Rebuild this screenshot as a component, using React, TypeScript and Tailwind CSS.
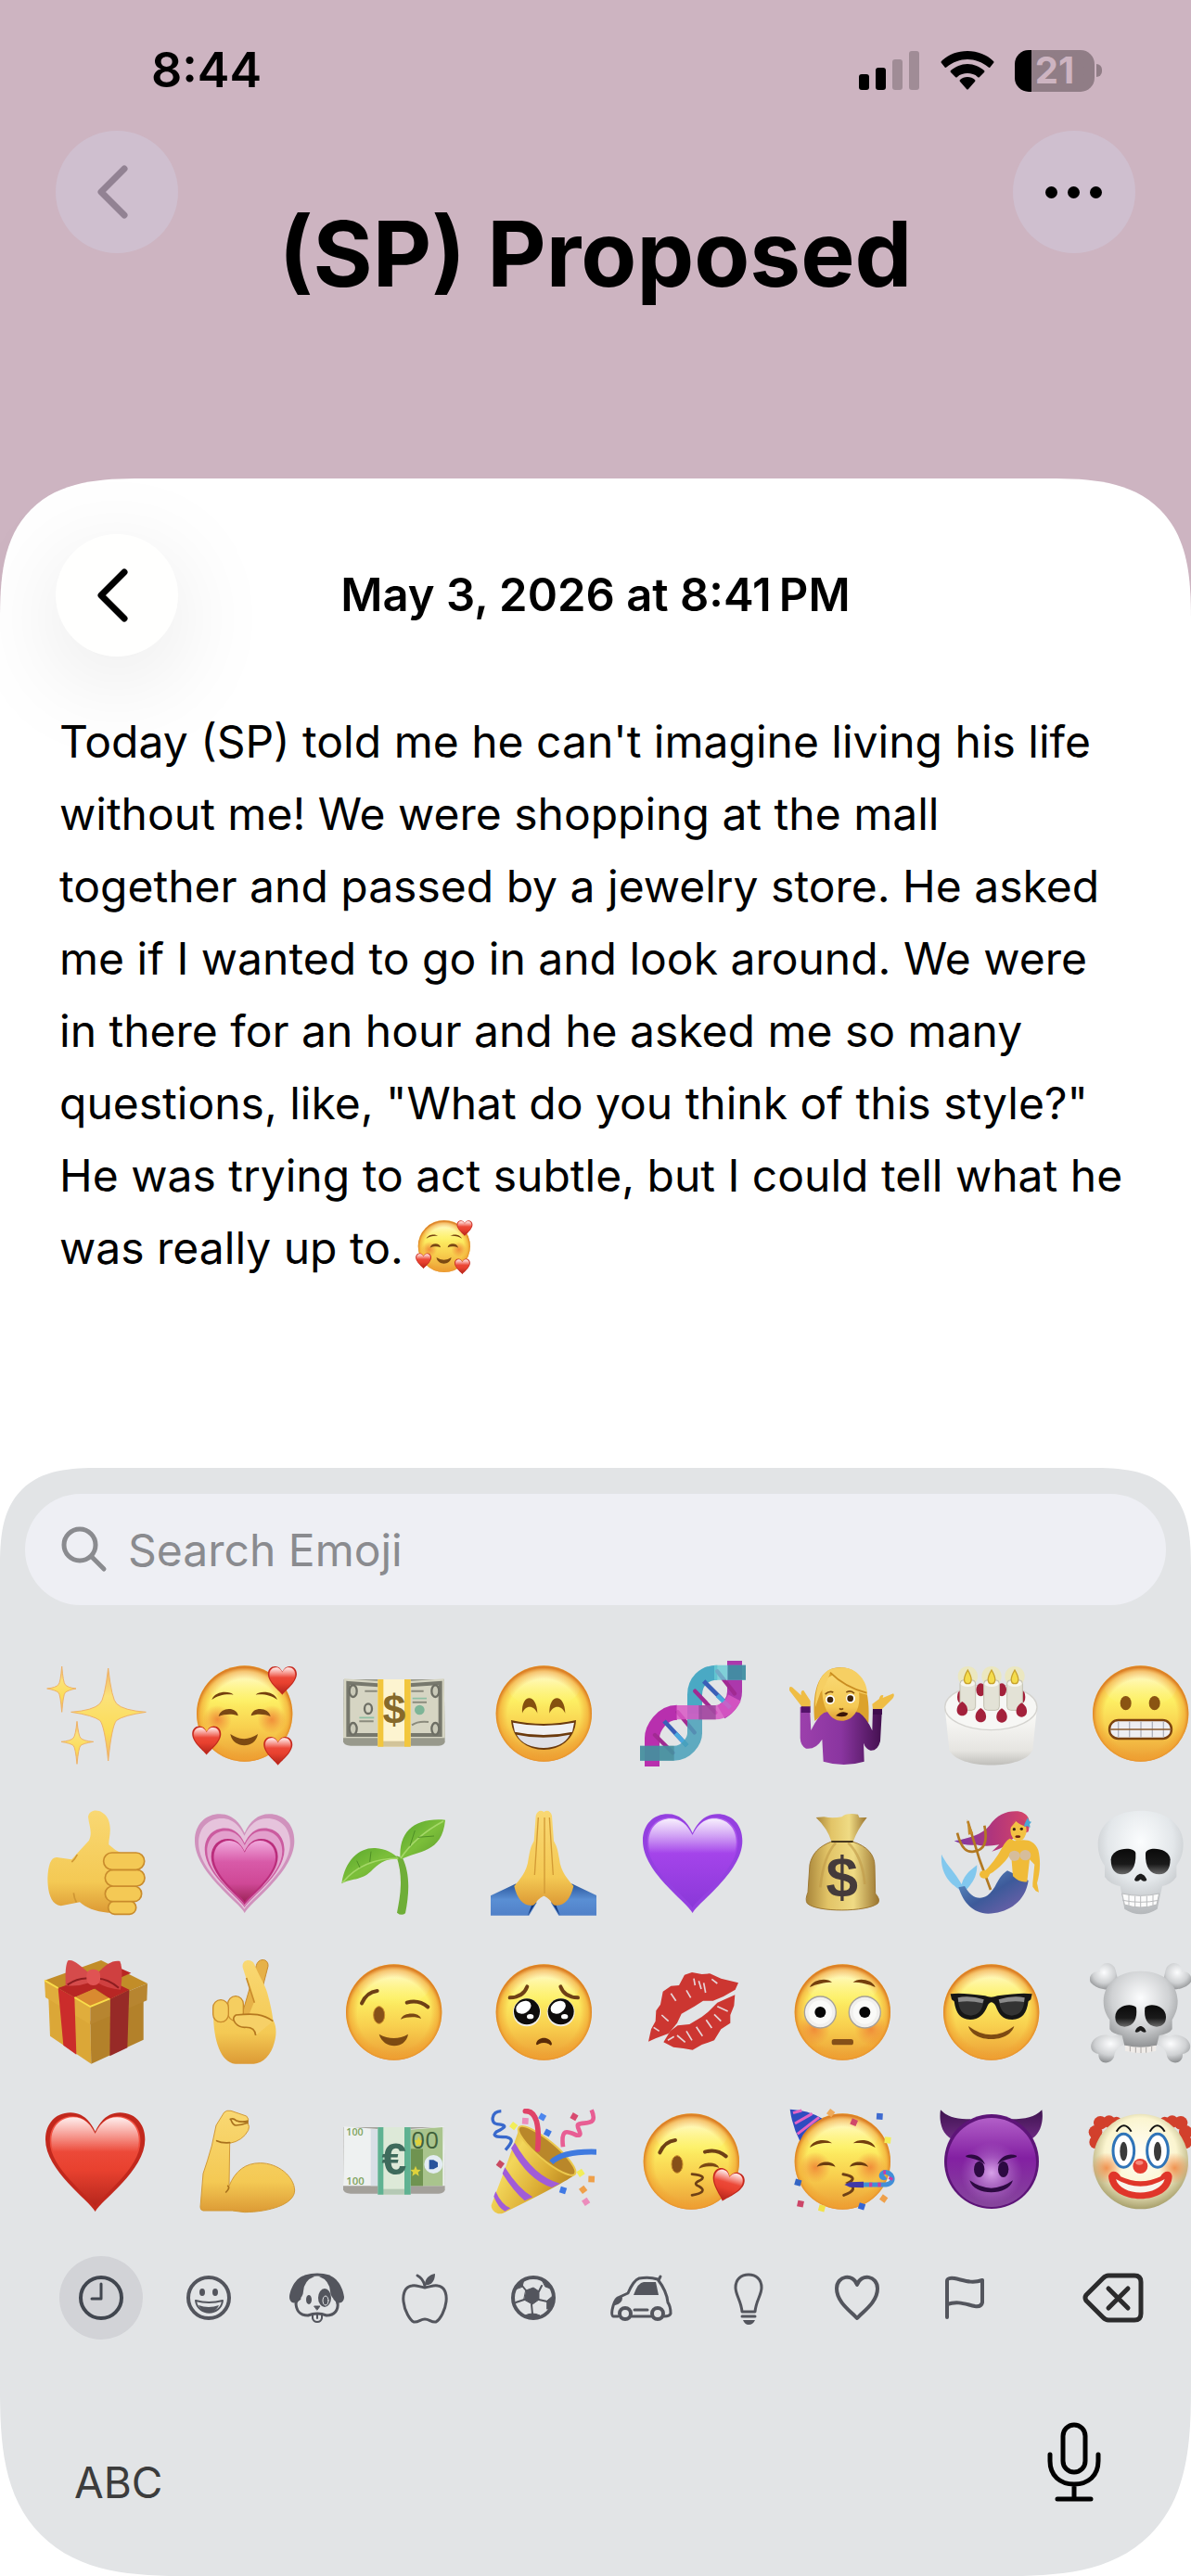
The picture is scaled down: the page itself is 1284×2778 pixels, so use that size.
import { useState } from 'react';
import type { ReactNode } from 'react';

interface Glyph {
  label: string;
  art: ReactNode;
}

const HEART =
  'M170 333 C150 296 9 200 9 100 C9 45 45 13 90 13 C127 13 152 36 170 74 C188 36 213 13 250 13 C295 13 331 45 331 100 C331 200 190 296 170 333Z';

const entryLines = [
  "Today (SP) told me he can't imagine living his life",
  'without me! We were shopping at the mall',
  'together and passed by a jewelry store. He asked',
  'me if I wanted to go in and look around. We were',
  'in there for an hour and he asked me so many',
  'questions, like, "What do you think of this style?"',
  'He was trying to act subtle, but I could tell what he',
];

// Gradients are shared by every emoji on the page, so they are defined once.
function Gradients() {
  return (
    <svg width="0" height="0" className="absolute" aria-hidden="true">
      <defs>
        <linearGradient id="face" x1="0" y1="0" x2="0" y2="1">
          <stop offset="0" stopColor="#fff08a" />
          <stop offset="0.35" stopColor="#fdf064" />
          <stop offset="0.65" stopColor="#f8cf4e" />
          <stop offset="1" stopColor="#eb9c34" />
        </linearGradient>
        <radialGradient id="rim" cx="0.5" cy="0.52" r="0.5">
          <stop offset="0.76" stopColor="#f0a030" stopOpacity="0" />
          <stop offset="0.92" stopColor="#f0a030" stopOpacity="0.6" />
          <stop offset="1" stopColor="#dd8126" />
        </radialGradient>
        <linearGradient id="shine" x1="0" y1="0" x2="0" y2="1">
          <stop offset="0" stopColor="#fffff0" stopOpacity="0.95" />
          <stop offset="1" stopColor="#fff57a" stopOpacity="0" />
        </linearGradient>
        <radialGradient id="blush">
          <stop offset="0" stopColor="#ee7c33" stopOpacity="0.8" />
          <stop offset="1" stopColor="#ee7c33" stopOpacity="0" />
        </radialGradient>
        <linearGradient id="red" x1="0" y1="0" x2="0" y2="1">
          <stop offset="0" stopColor="#f4584a" />
          <stop offset="0.6" stopColor="#e8412f" />
          <stop offset="1" stopColor="#b5261c" />
        </linearGradient>
        <linearGradient id="gloss" x1="0" y1="0" x2="0" y2="1">
          <stop offset="0" stopColor="#fff" stopOpacity="0.9" />
          <stop offset="0.4" stopColor="#fff" stopOpacity="0" />
        </linearGradient>
        <linearGradient id="violet" x1="0" y1="0" x2="0" y2="1">
          <stop offset="0" stopColor="#b164ee" />
          <stop offset="0.4" stopColor="#a444ea" />
          <stop offset="1" stopColor="#8a38d8" />
        </linearGradient>
        <linearGradient id="pink" x1="0" y1="0" x2="0" y2="1">
          <stop offset="0" stopColor="#f0a8dc" />
          <stop offset="0.35" stopColor="#d85aa8" />
          <stop offset="0.7" stopColor="#cf4896" />
          <stop offset="1" stopColor="#9c2458" />
        </linearGradient>
        <linearGradient id="skin" x1="0" y1="0" x2="0" y2="1">
          <stop offset="0" stopColor="#f9d873" />
          <stop offset="0.7" stopColor="#f4c954" />
          <stop offset="1" stopColor="#dc9a35" />
        </linearGradient>
        <linearGradient id="star" x1="0" y1="0" x2="0" y2="1">
          <stop offset="0" stopColor="#f2b368" />
          <stop offset="0.3" stopColor="#fbe27a" />
          <stop offset="0.7" stopColor="#fbdc56" />
          <stop offset="1" stopColor="#f0b070" />
        </linearGradient>
        <linearGradient id="gold" x1="0" y1="0" x2="1" y2="0">
          <stop offset="0" stopColor="#a8853a" />
          <stop offset="0.3" stopColor="#e2c467" />
          <stop offset="0.65" stopColor="#efdb84" />
          <stop offset="1" stopColor="#9a7430" />
        </linearGradient>
        <linearGradient id="foil" x1="0" y1="0" x2="1" y2="0.6">
          <stop offset="0" stopColor="#c28f24" />
          <stop offset="0.35" stopColor="#f3d75a" />
          <stop offset="0.7" stopColor="#dcae35" />
          <stop offset="1" stopColor="#b8841f" />
        </linearGradient>
        <linearGradient id="leaf" x1="0" y1="0" x2="1" y2="1">
          <stop offset="0" stopColor="#57a52c" />
          <stop offset="0.5" stopColor="#7cbf3a" />
          <stop offset="1" stopColor="#5a9a2a" />
        </linearGradient>
        <linearGradient id="sleeve" x1="0" y1="0" x2="0" y2="1">
          <stop offset="0" stopColor="#2a569c" />
          <stop offset="0.5" stopColor="#5a8fd4" />
          <stop offset="1" stopColor="#5080c8" />
        </linearGradient>
        <linearGradient id="sweater" x1="0" y1="0" x2="1" y2="0">
          <stop offset="0" stopColor="#9c40ac" />
          <stop offset="0.5" stopColor="#8a35a0" />
          <stop offset="1" stopColor="#43104f" />
        </linearGradient>
        <linearGradient id="cake" x1="0" y1="0" x2="0" y2="1">
          <stop offset="0" stopColor="#fdfdfb" />
          <stop offset="0.75" stopColor="#e6e5e1" />
          <stop offset="1" stopColor="#bfbeba" />
        </linearGradient>
        <radialGradient id="bone" cx="0.5" cy="0.3" r="0.7">
          <stop offset="0" stopColor="#fbfdfe" />
          <stop offset="0.55" stopColor="#e3e7ea" />
          <stop offset="1" stopColor="#b4b7ba" />
        </radialGradient>
        <radialGradient id="steel" cx="0.5" cy="0.35" r="0.65">
          <stop offset="0" stopColor="#fcfdfe" />
          <stop offset="0.6" stopColor="#cfd1d3" />
          <stop offset="1" stopColor="#8e9092" />
        </radialGradient>
        <linearGradient id="socket" x1="0" y1="0" x2="0" y2="1">
          <stop offset="0" stopColor="#0a0a0a" />
          <stop offset="0.6" stopColor="#1a1a1a" />
          <stop offset="1" stopColor="#6a6a6a" />
        </linearGradient>
        <linearGradient id="tail" x1="0" y1="0" x2="1" y2="1">
          <stop offset="0" stopColor="#5f96c8" />
          <stop offset="0.5" stopColor="#3d5a9a" />
          <stop offset="1" stopColor="#7b62ad" />
        </linearGradient>
        <linearGradient id="mane" x1="0" y1="0" x2="1" y2="0">
          <stop offset="0" stopColor="#7d3aa8" />
          <stop offset="0.5" stopColor="#b0357c" />
          <stop offset="1" stopColor="#d64568" />
        </linearGradient>
        <linearGradient id="imp" x1="0" y1="0" x2="0" y2="1">
          <stop offset="0" stopColor="#b25fc8" />
          <stop offset="0.45" stopColor="#8320a2" />
          <stop offset="1" stopColor="#86479c" />
        </linearGradient>
        <radialGradient id="impGlow">
          <stop offset="0" stopColor="#d8a2ea" />
          <stop offset="1" stopColor="#b070c8" stopOpacity="0" />
        </radialGradient>
        <linearGradient id="horn" x1="0" y1="0" x2="0" y2="1">
          <stop offset="0" stopColor="#3f1450" />
          <stop offset="1" stopColor="#6d2a82" />
        </linearGradient>
        <radialGradient id="clown" cx="0.5" cy="0.42" r="0.58">
          <stop offset="0" stopColor="#fffef8" />
          <stop offset="0.65" stopColor="#fbf5d0" />
          <stop offset="1" stopColor="#a8a06c" />
        </radialGradient>
      </defs>
    </svg>
  );
}

function Emoji({ label, children, className }: { label: string; children: ReactNode; className: string }) {
  return (
    <svg viewBox="0 0 342 342" role="img" aria-label={label} className={className}>
      {children}
    </svg>
  );
}

function Mirror({ children }: { children: ReactNode }) {
  return (
    <>
      {children}
      <g transform="translate(340 0) scale(-1 1)">{children}</g>
    </>
  );
}

function Face({ cx = 170 }: { cx?: number }) {
  return (
    <>
      <circle cx={cx} cy="171" r="155" fill="url(#face)" />
      <ellipse cx={cx} cy="86" rx="116" ry="64" fill="url(#shine)" />
      <circle cx={cx} cy="171" r="155" fill="url(#rim)" />
    </>
  );
}

function Heart({ x, y, size, fill = 'url(#red)', edge = '#c2281d' }: { x: number; y: number; size: number; fill?: string; edge?: string }) {
  return (
    <g transform={`translate(${x} ${y}) scale(${size / 342})`}>
      <path d={HEART} fill={edge} />
      <path d={HEART} transform="translate(15 13) scale(0.91)" fill={fill} />
      <path d={HEART} transform="translate(20 16) scale(0.88)" fill="url(#gloss)" />
    </g>
  );
}

const sadLine = { fill: 'none', stroke: '#6e4016', strokeWidth: 12, strokeLinecap: 'round' as const };
const closedEye = 'M92 174 C100 156 138 156 144 174 C130 168 106 168 92 174Z';

function Wink({ dx = 0 }: { dx?: number }) {
  return (
    <g transform={`translate(${dx} 0)`}>
      <path d="M66 142 Q82 106 116 102" {...sadLine} />
      <path d="M212 140 Q248 128 280 154" {...sadLine} />
      <ellipse cx="122" cy="180" rx="18" ry="28" fill="#875018" stroke="#c98b2a" strokeWidth="3" />
      <path d="M192 194 C200 170 252 170 258 192 C240 184 212 186 192 194Z" fill="#7a4714" />
    </g>
  );
}

function Star({ cx, cy, left, right, top, bottom }: { cx: number; cy: number; left: number; right: number; top: number; bottom: number }) {
  const w = (right - left) * 0.08;
  const h = (bottom - top) * 0.09;
  return (
    <path
      d={`M${cx} ${top} Q${cx + w * 0.6} ${cy - h * 1.5} ${cx + w * 1.4} ${cy - h} Q${cx + w * 2.5} ${cy - h * 0.2} ${right} ${cy} Q${cx + w * 2.5} ${cy + h * 0.4} ${cx + w * 1.4} ${cy + h} Q${cx + w * 0.6} ${cy + h * 1.6} ${cx} ${bottom} Q${cx - w * 0.6} ${cy + h * 1.6} ${cx - w * 1.4} ${cy + h} Q${cx - w * 2.5} ${cy + h * 0.4} ${left} ${cy} Q${cx - w * 2.5} ${cy - h * 0.2} ${cx - w * 1.4} ${cy - h} Q${cx - w * 0.6} ${cy - h * 1.5} ${cx} ${top}Z`}
      fill="url(#star)"
      stroke="#efb266"
      strokeWidth="3"
    />
  );
}

function SmilingHearts() {
  return (
    <>
      <Face />
      <circle cx="82" cy="190" r="46" fill="url(#blush)" />
      <circle cx="258" cy="190" r="46" fill="url(#blush)" />
      <Mirror>
        <path d="M64 126 C74 98 120 96 134 110 C112 106 82 112 64 126Z" fill="#743f0e" />
        <path d="M86 180 C92 148 146 148 149 178 C130 170 104 172 86 180Z" fill="#7a4714" />
      </Mirror>
      <path d="M124 237 Q169 268 213 237 C206 286 132 286 124 237Z" fill="#7d4a12" />
      <Heart x={243} y={14} size={99} />
      <Heart x={-2} y={208} size={99} />
      <Heart x={229} y={242} size={99} />
    </>
  );
}

function Banknote({ euro = false }: { euro?: boolean }) {
  const edge = euro ? '#5fb292' : '#f2c63d';
  return (
    <>
      <path d="M8 60 L6 262 Q10 275 30 275 L315 275 Q334 274 335 262 L332 60Z" fill={euro ? '#a3a09a' : '#98998c'} />
      <path d="M9 58 L170 70 L332 58 L335 250 L6 250Z" fill={euro ? '#eef1f1' : '#d6d5c3'} />
      {euro ? (
        <>
          <path d="M95 66 L170 70 V250 H95Z" fill="#d8dfe6" />
          <path d="M220 68 L328 60 V250 H220Z" fill="#a9c48d" />
          <path d="M222 130 L264 130 V250 H222Z" fill="#6f9350" />
          <circle cx="298" cy="180" r="30" fill="#e3ecf2" />
          <path d="M284 166 h14 l14 8 v14 l-14 8 h-14Z" fill="#28549c" />
          <path d="M250 90 l5 12 12 1 -9 8 3 12 -11 -7 -11 7 3 -12 -9 -8 12 -1Z M240 185 l5 12 12 1 -9 8 3 12 -11 -7 -11 7 3 -12 -9 -8 12 -1Z" fill="#dfd23c" />
          <text x="16" y="88" fontSize="32" fontFamily="Open Sans" fontWeight="600" fill="#7fa35e">100</text>
          <text x="16" y="246" fontSize="34" fontFamily="Open Sans" fontWeight="600" fill="#7fa35e">100</text>
          <text x="226" y="129" fontSize="78" fontFamily="Open Sans" fill="#40603a">00</text>
        </>
      ) : (
        <>
          <path d="M22 72 L165 82 V240 H22Z M176 82 L320 72 V240 H176Z" fill="none" stroke="#77786d" strokeWidth="12" />
          <g fill="#c9c9b8" stroke="#6d6e64" strokeWidth="7">
            <ellipse cx="38" cy="98" rx="12" ry="19" />
            <ellipse cx="38" cy="220" rx="12" ry="19" />
            <ellipse cx="304" cy="98" rx="12" ry="19" />
            <ellipse cx="304" cy="220" rx="12" ry="19" />
            <ellipse cx="87" cy="155" rx="12" ry="16" fill="none" />
          </g>
          <circle cx="253" cy="159" r="16" fill="#7db597" />
          <path d="M58 184 h48 M230 122 h46" stroke="#8fc0a4" strokeWidth="5" />
          <path d="M76 98 h40 M226 98 h40 M58 196 h46 M230 134 h46 M228 208 q20 -14 54 -10" stroke="#8b8b7d" strokeWidth="6" fill="none" />
        </>
      )}
      <rect x="118" y="60" width="106" height="218" rx="3" fill={euro ? '#dde9d8' : '#fdf4d0'} />
      <rect x="118" y="260" width="106" height="18" fill={euro ? '#b5c9b5' : '#d2c49a'} />
      <rect x="118" y="60" width="18" height="218" fill={edge} />
      <rect x="204" y="60" width="20" height="218" fill={edge} />
      <text x="171" y={euro ? 213 : 205} textAnchor="middle" fontSize={euro ? 145 : 134} fontWeight="700" fontFamily="Liberation Sans" fill={euro ? '#3e6a5c' : '#86692a'}>
        {euro ? '€' : '$'}
      </text>
    </>
  );
}

function Confetti({ items }: { items: [number, number, string][] }) {
  return (
    <>
      {items.map(([x, y, fill]) => (
        <rect key={`${x}-${y}`} x={x - 10} y={y - 10} width="20" height="20" fill={fill} transform={`rotate(${(x * 7) % 60} ${x} ${y})`} />
      ))}
    </>
  );
}

const emojiRows: Glyph[][] = [
  [
    {
      label: 'Sparkles',
      art: (
        <>
          <Star cx={212} cy={166} left={92} right={334} top={24} bottom={324} />
          <Star cx={62} cy={90} left={14} right={108} top={18} bottom={166} />
          <Star cx={111} cy={262} left={60} right={164} top={196} bottom={334} />
        </>
      ),
    },
    { label: 'Smiling face with hearts', art: <SmilingHearts /> },
    { label: 'Dollar banknotes', art: <Banknote /> },
    {
      label: 'Beaming face',
      art: (
        <>
          <Face cx={172} />
          <path d="M102 170 C98 104 150 104 151 170 C140 142 112 142 102 170Z M190 170 C188 104 240 104 241 170 C230 142 202 142 190 170Z" fill="#85500f" />
          <path d="M66 192 Q171 216 276 192 C270 320 74 320 66 192Z" fill="#6b3a0d" />
          <path d="M72 200 Q171 220 270 200 L264 230 Q171 250 78 230Z" fill="#f0f0f2" />
          <path d="M84 239 Q171 258 256 239 C230 296 112 296 84 239Z" fill="#dfe0e6" />
        </>
      ),
    },
    {
      label: 'DNA',
      art: (
        <g fill="none">
          <path d="M39 342 V250 C39 220 70 167 120 167" stroke="#b82fae" strokeWidth="48" />
          <path d="M177 170 V110 C177 70 205 38 250 38" stroke="#4aa9c4" strokeWidth="48" />
          <path d="M306 0 V100 C306 125 290 150 262 166" stroke="#ac38ac" strokeWidth="48" />
          <path d="M78 195 L152 275 M206 66 L292 152" stroke="#3a5fb8" strokeWidth="14" />
          <path d="M115 235 L152 275 M250 112 L292 152" stroke="#4aa8de" strokeWidth="14" />
          <path d="M48 240 L106 298 M122 166 L176 232 M178 98 L244 168 M250 34 L306 106" stroke="#a12a92" strokeWidth="13" strokeLinecap="round" />
          <path d="M0 299 H110 C150 299 177 260 177 235 V160" stroke="#48a0b8" strokeOpacity="0.85" strokeWidth="48" />
          <path d="M0 299 H110" stroke="#45868f" strokeOpacity="0.6" strokeWidth="48" />
          <path d="M118 167 H245 C270 167 290 150 306 120" stroke="#d858c4" strokeOpacity="0.85" strokeWidth="46" />
          <path d="M190 167 H245" stroke="#86408c" strokeOpacity="0.6" strokeWidth="46" />
          <path d="M240 38 H342" stroke="#68cbd4" strokeOpacity="0.8" strokeWidth="48" />
          <path d="M284 38 H342" stroke="#357f96" strokeOpacity="0.75" strokeWidth="48" />
        </g>
      ),
    },
    {
      label: 'Woman shrugging',
      art: (
        <>
          <path d="M82 195 C74 120 84 22 165 21 C244 22 262 110 256 200 L230 196 L100 180Z" fill="#dca22c" />
          <path d="M35 150 L66 150 L70 225 Q92 180 112 168 Q170 150 226 168 Q250 184 268 226 L270 150 L300 152 L294 260 Q286 292 262 290 Q246 284 240 266 L242 326 Q176 346 110 326 L106 254 Q86 288 54 284 Q36 276 35 250Z" fill="url(#sweater)" />
          <rect x="38" y="146" width="30" height="22" fill="#54126a" />
          <rect x="270" y="154" width="30" height="20" fill="#3f0d4e" />
          <path d="M40 148 Q26 130 0 96 Q-2 80 10 86 L38 112 Q36 94 46 96 L68 130 L68 148Z" fill="#efbd45" />
          <path d="M270 156 L268 140 L290 124 Q294 108 304 112 L302 120 L336 106 Q342 112 334 122 L300 156Z" fill="#efbd45" />
          <path d="M106 96 Q112 40 170 44 Q222 50 226 110 C230 170 196 196 168 194 C136 194 108 160 106 96Z" fill="url(#skin)" />
          <path d="M84 150 C84 60 114 26 150 24 C210 10 254 62 252 110 Q180 96 132 40 Q118 80 100 104Z" fill="#f6cf63" />
          <path d="M132 38 Q180 86 250 104" stroke="#c98c20" strokeWidth="5" fill="none" />
          <circle cx="132" cy="126" r="15" fill="#fff" />
          <circle cx="198" cy="122" r="15" fill="#fff" />
          <circle cx="132" cy="126" r="10" fill="#3e240c" />
          <circle cx="197" cy="122" r="10" fill="#3e240c" />
          <path d="M116 108 q14 -12 26 -6 M184 102 q16 -8 26 4 M162 154 q6 6 12 0" stroke="#855210" strokeWidth="5" fill="none" />
          <path d="M150 178 Q170 158 190 170 Q184 186 150 178Z" fill="#3b1508" />
        </>
      ),
    },
    {
      label: 'Birthday cake',
      art: (
        <>
          <path d="M20 150 L34 288 C60 354 280 354 304 288 L318 150Z" fill="url(#cake)" />
          <ellipse cx="169" cy="150" rx="149" ry="74" fill="#f7f7f5" stroke="#d4d3cf" strokeWidth="4" />
          <g fill="#a3213b">
            <ellipse cx="136" cy="94" rx="15" ry="21" />
            <ellipse cx="204" cy="94" rx="15" ry="21" />
            <ellipse cx="70" cy="117" rx="10" ry="20" />
            <ellipse cx="270" cy="117" rx="10" ry="20" />
          </g>
          {[94, 171, 246].map((x) => (
            <g key={x}>
              <circle cx={x} cy="50" r="32" fill="#fff06a" opacity="0.3" />
              <rect x={x - 25} y="62" width="50" height="98" rx="12" fill="#e3e2d6" stroke="#c3c1b0" strokeWidth="3" />
              <ellipse cx={x} cy="74" rx="23" ry="10" fill="#f6f5ee" />
              <path d={`M${x} 30 C${x + 18} 60 ${x + 12} 74 ${x} 74 C${x - 12} 74 ${x - 18} 60 ${x} 30Z`} fill="#f4dc4c" stroke="#c8a22c" strokeWidth="4" />
            </g>
          ))}
          {[[76, 156], [136, 177], [204, 178], [268, 160]].map(([x, y]) => (
            <path key={x} d={`M${x} ${y - 24} C${x + 24} ${y - 10} ${x + 22} ${y + 22} ${x} ${y + 22} C${x - 22} ${y + 22} ${x - 24} ${y - 10} ${x} ${y - 24}Z`} fill="#a3213b" />
          ))}
        </>
      ),
    },
    {
      label: 'Grimacing face',
      art: (
        <>
          <Face />
          <ellipse cx="122" cy="137" rx="18" ry="23" fill="#8a5412" />
          <ellipse cx="215" cy="137" rx="18" ry="23" fill="#8a5412" />
          <rect x="69" y="192" width="201" height="60" rx="29" fill="#eeeef2" stroke="#7c430f" strokeWidth="7" />
          <path d="M98 196 V248 M134 196 V248 M171 196 V248 M208 196 V248 M244 196 V248" stroke="#b0b2bd" strokeWidth="4" />
          <path d="M70 222 H270" stroke="#8a5a2c" strokeWidth="5" />
        </>
      ),
    },
  ],
  [
    {
      label: 'Thumbs up',
      art: (
        <>
          <path d="M147 22 C152 -8 196 -4 212 30 C226 66 212 94 214 112 Q232 130 256 140 L240 330 L212 332 C170 330 138 314 120 298 L59 310 C28 306 16 270 16 220 C18 178 26 152 46 153 L94 160 Q120 130 150 98 C162 70 150 52 147 22Z" fill="url(#skin)" />
          <g fill="#f4c955" stroke="#c98b2c" strokeWidth="5">
            <rect x="212" y="294" width="90" height="43" rx="21" />
            <rect x="202" y="246" width="118" height="50" rx="25" />
            <rect x="202" y="193" width="128" height="53" rx="26" />
            <rect x="197" y="138" width="132" height="55" rx="27" />
          </g>
          <path d="M94 168 Q104 160 112 144 M109 298 Q102 286 100 268" stroke="#cf9634" strokeWidth="5" fill="none" />
        </>
      ),
    },
    {
      label: 'Growing heart',
      art: (
        <>
          <path d={HEART} fill="#d092bd" />
          <path d={HEART} transform="translate(13 15) scale(0.92)" fill="#e6c3dc" />
          <path d={HEART} transform="translate(34 48) scale(0.8)" fill="#cb5b9f" />
          <path d={HEART} transform="translate(42 58) scale(0.755)" fill="#e3a0cd" />
          <path d={HEART} transform="translate(56 84) scale(0.67)" fill="#bb2d7c" />
          <path d={HEART} transform="translate(65 91) scale(0.62)" fill="url(#pink)" />
        </>
      ),
    },
    {
      label: 'Seedling',
      art: (
        <>
          <path d="M178 148 C202 220 190 280 180 332 Q194 344 207 334 C222 260 220 200 198 155Z" fill="#6fae38" />
          <path d="M191 160 C184 66 240 24 336 32 C326 140 250 130 191 160Z" fill="url(#leaf)" />
          <path d="M1 238 C12 160 60 120 110 123 C142 125 170 138 188 160 C150 152 122 170 96 198 C62 230 30 220 1 238Z" fill="url(#leaf)" />
          <path d="M192 156 Q240 84 330 36 M4 234 Q70 156 184 156" stroke="#a5d868" strokeWidth="5" fill="none" />
          <path d="M222 116 L238 66 M248 88 L300 84 M60 186 L50 164 M92 168 L96 134" stroke="#4f8f26" strokeWidth="3" />
        </>
      ),
    },
    {
      label: 'Folded hands',
      art: (
        <g transform="translate(2 0)">
          <Mirror>
            <path d="M-2 277 L80 238 L96 290 L147 300 L122 341 L-2 341Z" fill="url(#sleeve)" />
            <path d="M118 341 L147 296 L132 304Z" fill="#16397c" />
            <path d="M174 12 C166 -4 148 0 144 18 L138 100 C124 126 126 130 120 158 C116 200 90 226 74 246 C84 290 106 312 134 308 C148 304 142 290 174 276Z" fill="url(#skin)" />
            <path d="M152 24 L146 118 L140 210 M168 24 V270" stroke="#d39a35" strokeWidth="4" fill="none" />
          </Mirror>
        </g>
      ),
    },
    {
      label: 'Purple heart',
      art: <Heart x={0} y={0} size={342} fill="url(#violet)" edge="#9440e0" />,
    },
    {
      label: 'Money bag',
      art: (
        <>
          <path d="M86 24 L112 22 Q140 28 170 22 Q184 8 222 14 L226 24 L251 24 Q222 60 206 102 H136 Q124 60 86 24Z" fill="url(#gold)" />
          <path d="M134 103 H206 C250 116 276 144 276 180 L278 270 Q296 290 286 302 C250 330 90 332 58 302 Q50 290 60 266 L66 176 C74 140 96 118 134 103Z" fill="url(#gold)" stroke="#9d7834" strokeWidth="3" />
          <path d="M150 106 Q110 150 100 250 M190 106 Q236 150 244 240" stroke="#c09a48" strokeWidth="8" fill="none" opacity="0.6" />
          <path d="M136 102 H206" stroke="#2e2315" strokeWidth="5" />
          <text x="170" y="280" textAnchor="middle" fontSize="186" fontWeight="700" fontFamily="Liberation Sans" fill="#453b3b">$</text>
        </>
      ),
    },
    {
      label: 'Mermaid',
      art: (
        <>
          <path d="M74 262 C40 240 4 210 9 143 C26 180 50 196 74 240 C84 204 110 190 124 178 C124 220 106 240 82 266Z" fill="#82c8ee" />
          <path d="M222 196 L290 228 C280 300 220 334 160 335 C110 334 80 300 64 250 L84 246 C104 282 130 294 158 276 C188 252 190 216 222 196Z" fill="url(#tail)" />
          <path d="M50 100 C100 90 140 80 164 50 C190 14 220 2 256 4 C296 10 298 40 290 70 L240 92 Q220 120 172 134 L196 112 Q150 120 120 112 Q90 118 50 100Z" fill="url(#mane)" />
          <path d="M230 92 L246 100 C280 92 310 96 322 130 C332 170 326 210 318 236 L324 266 L314 262 L304 248 L304 236 L310 176 L294 160 L286 232 Q262 236 240 214 L234 140 Q200 190 156 212 L140 206 Q180 170 206 120 Q216 100 230 92Z" fill="#f0bb38" />
          <ellipse cx="258" cy="66" rx="26" ry="34" fill="#f3c244" />
          <path d="M230 60 C240 22 280 20 290 56 Q262 48 250 36Z" fill="#c8406a" />
          <path d="M282 36 l6 -12 4 12 8 2 -6 8 2 10 -10 -4 -10 2 2 -10Z" fill="#4ba8d4" />
          <circle cx="244" cy="62" r="5" fill="#3a2211" />
          <circle cx="268" cy="61" r="5" fill="#3a2211" />
          <ellipse cx="256" cy="86" rx="9" ry="4" fill="#6e2410" />
          <ellipse cx="245" cy="148" rx="18" ry="17" fill="#d6bd9c" />
          <ellipse cx="280" cy="146" rx="18" ry="17" fill="#d6bd9c" />
          <path d="M94 36 L132 160 L168 258 M60 74 C74 128 92 138 114 134 C144 130 160 110 148 50" stroke="#b27922" strokeWidth="8" fill="none" />
          <path d="M92 30 L112 76 L96 80Z" fill="#c48a2a" />
          <ellipse cx="148" cy="208" rx="16" ry="13" fill="#f0bb38" />
        </>
      ),
    },
    {
      label: 'Skull',
      art: (
        <>
          <path d="M32 108 C34 44 90 2 170 2 C250 2 306 44 308 108 C308 140 300 160 286 180 L286 216 Q270 240 240 246 L224 320 Q170 354 118 320 L104 246 Q70 240 54 216 L54 180 C40 160 32 140 32 108Z" fill="url(#bone)" />
          <path d="M74 160 C76 120 152 116 154 140 C156 186 138 208 110 208 C86 208 74 190 74 160Z" fill="url(#socket)" />
          <path d="M266 160 C264 120 188 116 186 140 C184 186 202 208 230 208 C254 208 266 190 266 160Z" fill="url(#socket)" />
          <path d="M150 226 C154 212 164 206 170 206 C176 206 186 212 190 226 Q184 236 170 224 Q156 236 150 226Z" fill="#1c1c1c" />
          <path d="M110 270 Q170 284 230 270 L222 306 Q170 324 118 306Z" fill="#fbfbfb" stroke="#b9bbbd" strokeWidth="3" />
          <path d="M132 274 V312 M152 278 V316 M170 278 V318 M190 278 V316 M210 274 V312 M112 292 Q170 304 228 292" stroke="#b9bbbd" strokeWidth="3" fill="none" />
        </>
      ),
    },
  ],
  [
    {
      label: 'Wrapped gift',
      art: (
        <>
          <path d="M19 125 L154 200 L157 338 L24 248Z" fill="#dba737" />
          <path d="M326 130 L154 200 L157 338 L326 260Z" fill="#b3812a" />
          <path d="M6 68 L189 3 L339 78 L154 153Z" fill="#c28d28" />
          <path d="M6 68 L154 153 V211 L9 123Z" fill="#e0ad3c" />
          <path d="M339 78 L154 153 V211 L337 133Z" fill="#b78530" />
          <path d="M50 93 L103 123 L109 308 L67 278Z" fill="#cb2c2b" />
          <path d="M219 128 L280 98 L274 286 L217 313Z" fill="#972a27" />
          <path d="M50 93 L240 24 L286 44 L103 123Z M104 52 L160 40 L280 98 L219 128Z" fill="#b82624" />
          <path d="M103 123 L165 96 L217 127 L154 153Z" fill="#d98a30" />
          <path d="M6 68 L50 93 M103 123 L154 153 L217 127" stroke="#f9dd4a" strokeWidth="6" fill="none" />
          <path d="M150 44 C120 20 100 -2 82 4 C72 20 74 60 74 84 Q110 90 150 76Z" fill="#d54b4b" />
          <path d="M178 44 C204 16 226 2 250 6 C260 30 256 70 252 98 Q210 96 178 76Z" fill="#cf4040" />
          <path d="M80 82 Q116 58 150 62 M246 92 Q210 62 178 62" stroke="#8d1d20" strokeWidth="6" fill="none" />
          <rect x="142" y="32" width="44" height="52" rx="20" fill="#e05353" />
        </>
      ),
    },
    {
      label: 'Crossed fingers',
      art: (
        <>
          <path d="M208 20 C214 -6 248 -4 246 22 L226 100 L196 190 L160 184Z" fill="#e6b148" stroke="#c98b2c" strokeWidth="3" />
          <path d="M69 180 L120 150 L180 190 L200 140 L164 26 C160 0 192 -4 202 16 C214 50 236 80 244 110 Q258 160 262 196 C276 220 272 250 266 270 C256 310 230 336 200 338 H140 C92 334 70 260 69 180Z" fill="url(#skin)" />
          <path d="M202 140 L176 60" stroke="#c98b2c" strokeWidth="5" />
          <g fill="#f5ce60" stroke="#c98b2c" strokeWidth="4">
            <rect x="116" y="119" width="50" height="80" rx="25" />
            <rect x="68" y="131" width="50" height="72" rx="25" />
          </g>
          <path d="M262 200 C230 176 200 174 142 180 C124 190 140 218 170 220 Q204 218 206 246" fill="#f6d067" stroke="#b5781f" strokeWidth="5" />
        </>
      ),
    },
    {
      label: 'Winking face',
      art: (
        <>
          <Face />
          <Wink />
          <path d="M122 242 Q170 268 216 242 C208 292 136 292 122 242Z" fill="#7d4a12" />
        </>
      ),
    },
    {
      label: 'Pleading face',
      art: (
        <>
          <Face cx={172} />
          <g transform="translate(2 0)">
            <Mirror>
              <path d="M60 124 Q104 122 116 88" {...sadLine} />
              <circle cx="115" cy="172" r="45" fill="#f0efe8" />
              <circle cx="115" cy="169" r="42" fill="#0e0c0b" />
            </Mirror>
          </g>
          <ellipse cx="106" cy="155" rx="26" ry="19" transform="rotate(-30 106 155)" fill="#fff" />
          <ellipse cx="218" cy="155" rx="26" ry="19" transform="rotate(-30 218 155)" fill="#fff" />
          <ellipse cx="128" cy="185" rx="11" ry="8" fill="#fff" />
          <ellipse cx="239" cy="185" rx="11" ry="8" fill="#fff" />
          <path d="M147 274 C150 248 194 248 198 274 Q196 282 188 274 Q172 266 156 274 Q148 280 147 274Z" fill="#5a2b08" />
        </>
      ),
    },
    {
      label: 'Kiss mark',
      art: (
        <>
          <path d="M27 266 L36 226 L50 200 L52 166 L66 146 L74 104 L100 86 L126 84 L144 50 L168 42 L200 48 L226 46 L262 62 L318 76 L308 98 L270 120 L236 134 L204 134 L176 152 L134 176 L120 206 L92 240 L50 256Z" fill="#cc3631" />
          <path d="M76 268 L98 232 L122 214 L160 210 L200 186 L220 170 L250 140 L307 115 L304 150 L292 180 L292 206 L262 226 L240 262 L200 276 L170 293 L140 288 L108 284Z" fill="#cc3631" />
          <path d="M190 70 L198 96 M206 76 L212 108 M174 62 L178 84 M150 100 L164 124 M232 64 L250 78 M100 110 L116 134 M70 180 L92 200 M44 220 L62 232 M120 246 L146 268 M150 232 L168 262 M182 218 L202 248 M214 196 L232 222 M240 178 L262 200 M90 262 L110 250 M250 152 L284 168" stroke="#e6d5d8" strokeWidth="5" />
        </>
      ),
    },
    {
      label: 'Flushed face',
      art: (
        <>
          <Face cx={172} />
          <g transform="translate(2 0)">
            <Mirror>
              <circle cx="78" cy="226" r="52" fill="url(#blush)" />
              <path d="M64 90 C74 64 120 58 136 74 C112 74 84 80 64 90Z" fill="#743f0e" />
              <circle cx="98" cy="171" r="51" fill="#f1f0ee" stroke="#a5a09a" strokeWidth="4" />
              <circle cx="98" cy="171" r="38" fill="#fafaf8" />
              <circle cx="98" cy="171" r="18" fill="#060606" />
            </Mirror>
          </g>
          <rect x="137" y="258" width="70" height="19" rx="8" fill="#855018" />
        </>
      ),
    },
    {
      label: 'Sunglasses face',
      art: (
        <>
          <Face />
          <path d="M96 216 Q170 272 244 216 C240 232 220 258 170 258 C120 258 100 232 96 216Z" fill="#7d4a12" />
          <path d="M38 112 Q70 106 150 118 Q170 126 190 118 Q270 106 302 112 L298 130 L290 136 C284 176 270 194 238 195 C206 194 196 180 184 150 Q170 128 158 150 C146 180 130 194 102 195 C70 194 56 176 50 136 L42 130Z" fill="#161616" />
          <Mirror>
            <path d="M62 124 Q100 116 146 130 C142 164 130 180 104 182 C76 180 64 164 62 124Z" fill="#343434" />
            <path d="M62 124 Q100 116 146 130 L142 142 Q100 132 64 138Z" fill="#8b8b8b" />
          </Mirror>
        </>
      ),
    },
    {
      label: 'Skull and crossbones',
      art: (
        <>
          <Mirror>
            <path d="M86 100 C60 96 30 100 8 74 C-2 50 24 34 38 42 C32 12 70 0 86 26 C92 40 92 54 98 66Z" fill="url(#steel)" />
            <path d="M110 240 L76 250 C50 236 16 252 10 276 C6 300 26 304 34 306 C32 340 72 344 84 316 C88 290 100 280 136 268Z" fill="url(#steel)" />
          </Mirror>
          <path d="M50 134 C52 76 100 38 170 38 C240 38 288 76 290 134 C290 166 280 180 272 196 L272 226 Q262 242 230 246 L222 278 Q170 296 118 278 L110 246 Q78 242 70 226 L70 196 C60 180 50 166 50 134Z" fill="url(#steel)" />
          <path d="M88 186 C88 150 140 138 156 156 C160 190 150 216 118 218 C98 216 88 206 88 186Z" fill="url(#socket)" />
          <path d="M252 186 C252 150 200 138 184 156 C180 190 190 216 222 218 C242 216 252 206 252 186Z" fill="url(#socket)" />
          <path d="M152 234 C156 220 166 216 170 216 C174 216 184 220 188 234 Q182 240 170 230 Q158 240 152 234Z" fill="#1c1c1c" />
          <path d="M120 278 Q170 290 220 278 V296 Q170 310 120 296Z" fill="#f0ece9" />
          <path d="M136 282 V298 M154 284 V302 M171 284 V303 M188 284 V302 M206 282 V298" stroke="#a9a6a4" strokeWidth="3" />
        </>
      ),
    },
  ],
  [
    { label: 'Red heart', art: <Heart x={0} y={0} size={342} /> },
    {
      label: 'Flexed biceps',
      art: (
        <>
          <path d="M78 54 L104 12 Q112 4 126 7 L176 24 Q186 32 180 46 Q188 58 182 70 Q164 104 122 112 L120 250 Q150 176 220 176 C280 176 330 220 332 264 C332 310 250 334 170 335 L130 330 L36 330 Q26 328 27 318 L36 210 Q50 170 64 120Z" fill="url(#skin)" stroke="#d19a38" strokeWidth="3" />
          <path d="M116 250 Q124 256 110 270 M80 104 Q96 112 122 110 M124 34 Q134 30 142 38 Q160 46 180 40 M126 36 Q132 54 142 54 Q158 54 180 46" stroke="#a8701c" strokeWidth="5" fill="none" strokeLinecap="round" />
        </>
      ),
    },
    { label: 'Euro banknotes', art: <Banknote euro /> },
    {
      label: 'Party popper',
      art: (
        <>
          <path d="M92 66 C100 40 290 180 274 212 Q240 240 40 338 C20 346 0 328 2 312 Q50 190 92 66Z" fill="url(#foil)" />
          <ellipse cx="182" cy="136" rx="118" ry="30" transform="rotate(40 182 136)" fill="#b9872a" stroke="#ecc94d" strokeWidth="6" />
          <path d="M66 128 Q120 230 198 255 L224 242 Q140 220 78 110Z M38 210 Q76 270 110 298 L136 286 Q90 260 46 190Z M10 284 Q24 320 46 332 L64 322 Q36 312 16 268Z" fill="#a15cd8" />
          <path d="M112 8 C150 6 158 60 152 132" stroke="#e04268" strokeWidth="17" fill="none" strokeLinecap="round" />
          <path d="M196 174 C220 150 270 138 342 140" stroke="#3f7ae0" strokeWidth="18" fill="none" />
          <path d="M34 8 C0 10 0 48 20 50 C60 54 44 62 20 74 C0 90 22 92 50 92 C78 98 66 112 48 134" stroke="#3969cc" strokeWidth="10" fill="none" />
          <path d="M234 124 C226 60 250 74 278 86 C304 90 276 60 282 52 C300 40 350 60 326 4" stroke="#e85e94" strokeWidth="14" fill="none" />
          <Confetti items={[[112, 40, '#ec8cbc'], [167, 27, '#4d87ee'], [74, 56, '#f2ee5a'], [184, 78, '#3f78e4'], [270, 26, '#d84a70'], [31, 180, '#c94a62'], [291, 208, '#f2ee5a'], [326, 228, '#efa04a'], [299, 262, '#efa04a'], [234, 264, '#3f78e4'], [308, 301, '#ec8cbc']]} />
        </>
      ),
    },
    {
      label: 'Kissing face',
      art: (
        <>
          <Face cx={166} />
          <Wink dx={-2} />
          <path d="M168 212 Q224 218 190 234 Q170 244 192 252 Q222 270 168 280" stroke="#6e4016" strokeWidth="8" fill="none" strokeLinecap="round" />
          <g transform="rotate(16 280 250)">
            <Heart x={226} y={194} size={110} />
          </g>
        </>
      ),
    },
    {
      label: 'Partying face',
      art: (
        <>
          <Face cx={172} />
          <path d="M2 2 Q60 4 106 32 Q54 58 34 104 Q10 60 2 2Z" fill="#2f4cc0" />
          <path d="M12 14 L40 6 M18 48 L74 16 M26 82 L96 28" stroke="#e463c4" strokeWidth="9" />
          <circle cx="84" cy="190" r="50" fill="url(#blush)" />
          <circle cx="262" cy="190" r="50" fill="url(#blush)" />
          <g transform="translate(2 0)">
            <Mirror>
              <path d="M64 126 C74 98 120 96 136 112 C112 108 82 114 64 126Z" fill="#743f0e" />
              <path d={closedEye} transform="translate(-19 -12) scale(1.15)" fill="#6b3c10" />
            </Mirror>
          </g>
          <path d="M174 212 Q226 222 190 240 Q228 262 176 280" stroke="#6e4016" strokeWidth="9" fill="none" strokeLinecap="round" />
          <path d="M178 246 L196 238 L240 236 V256 L196 254Z" fill="#4038a8" />
          <path d="M240 246 H312 C350 240 330 200 306 206 C290 214 300 230 312 222" stroke="#418fd8" strokeWidth="15" fill="none" />
          <path d="M258 246 h10 M286 246 h10 M326 230 l4 -8 M312 206 l-8 0" stroke="#c93ca4" strokeWidth="13" />
          <Confetti items={[[134, 14, '#efaa5a'], [209, 44, '#d0486a'], [292, 25, '#3f6bd0'], [318, 102, '#f2ee5a'], [28, 239, '#3465c4'], [36, 308, '#cc4668'], [105, 322, '#f2e24a'], [234, 316, '#3465d4'], [305, 291, '#efa04a']]} />
        </>
      ),
    },
    {
      label: 'Smiling devil',
      art: (
        <>
          <Mirror>
            <path d="M6 4 C30 28 60 34 104 34 L44 100 C10 84 0 40 6 4Z" fill="url(#horn)" />
          </Mirror>
          <circle cx="171" cy="171" r="153" fill="#5d1478" />
          <circle cx="171" cy="174" r="144" fill="url(#imp)" />
          <circle cx="171" cy="208" r="100" fill="url(#impGlow)" />
          <Mirror>
            <path d="M88 152 C110 142 140 152 150 180 C130 164 108 162 88 156Z" fill="#2d0a42" />
            <ellipse cx="131" cy="196" rx="17" ry="26" fill="#2d0a42" />
          </Mirror>
          <path d="M100 232 Q170 282 240 232 C226 284 114 284 100 232Z" fill="#2d0a42" />
        </>
      ),
    },
    {
      label: 'Clown face',
      art: (
        <>
          <Mirror>
            <g fill="#d2402c">
              <circle cx="40" cy="46" r="22" />
              <circle cx="68" cy="42" r="20" />
              <circle cx="24" cy="76" r="22" />
              <circle cx="26" cy="108" r="22" />
              <circle cx="92" cy="42" r="16" />
            </g>
          </Mirror>
          <circle cx="170" cy="171" r="154" fill="url(#clown)" />
          <circle cx="60" cy="192" r="50" fill="url(#blush)" />
          <circle cx="280" cy="192" r="50" fill="url(#blush)" />
          <Mirror>
            <path d="M92 74 Q116 36 140 74" stroke="#111" strokeWidth="6" fill="none" />
            <ellipse cx="115" cy="136" rx="34" ry="54" fill="#fff" stroke="#2f74b8" strokeWidth="9" />
            <ellipse cx="115" cy="138" rx="12" ry="31" fill="#3a3a3a" />
          </Mirror>
          <path d="M66 218 C72 196 96 200 106 220 Q170 250 234 220 C244 200 268 196 272 218 C270 316 70 316 66 218Z" fill="#e0352a" />
          <path d="M90 228 Q170 274 248 228 C232 286 106 286 90 228Z" fill="#f8f4ec" />
          <circle cx="169" cy="186" r="24" fill="#e33d31" />
          <ellipse cx="166" cy="175" rx="12" ry="7" fill="#f58a7c" />
        </>
      ),
    },
  ],
];

const categories: Glyph[] = [
  {
    label: 'Frequently used',
    art: (
      <>
        <circle cx="45" cy="45" r="22" />
        <path d="M45 30 V46 H35" strokeWidth="3" />
      </>
    ),
  },
  {
    label: 'Smileys',
    art: (
      <>
        <circle cx="45" cy="45" r="22" />
        <ellipse cx="38" cy="39" rx="3" ry="4" fill="currentColor" stroke="none" />
        <ellipse cx="52" cy="39" rx="3" ry="4" fill="currentColor" stroke="none" />
        <path d="M31 48 Q45 52 60 48 C58 65 33 65 31 48Z" strokeWidth="2" />
        <path d="M34 53 Q45 57 56 53 C52 63 38 63 34 53Z" fill="currentColor" stroke="none" />
      </>
    ),
  },
  {
    label: 'Animals',
    art: (
      <>
        <path d="M32 22 Q45 18 58 22 M22 50 C22 58 26 64 35 64 Q45 60 55 64 C64 64 68 58 67 50 M26 46 Q22 48 22 52 M64 46 Q67 48 67 52" strokeWidth="3" />
        <path d="M36 21 C24 19 16 34 15 44 C15 50 20 52 23 49 Q30 44 30 38 Q31 26 42 22Z M53 21 C65 19 73 34 74 44 C74 50 69 52 66 49 Q59 44 59 38 Q58 26 47 22Z" fill="currentColor" stroke="none" />
        <ellipse cx="53" cy="45" rx="7" ry="10" fill="currentColor" stroke="none" />
        <ellipse cx="54" cy="48" rx="3" ry="5" stroke="#e2e4e6" strokeWidth="1" />
        <ellipse cx="36" cy="47" rx="3" ry="5" fill="currentColor" stroke="none" />
        <path d="M42 54 h6 l-3 4Z" fill="currentColor" strokeWidth="1" />
        <path d="M40 64 V67 Q41 71 45 71 Q49 71 50 67 V64 M45 63 V67" strokeWidth="2" />
      </>
    ),
  },
  {
    label: 'Food',
    art: (
      <>
        <path d="M45 34 C38 33 36 31 31 32 C24 33 21 40 22 49 C23 59 29 69 33 71 C38 72 40 68 45 68 C50 68 52 72 57 71 C62 68 67 58 68 49 C69 40 66 33 59 32 C54 31 52 33 45 34Z" strokeWidth="3" />
        <path d="M37 21 Q43 24 45 32" strokeWidth="3" />
        <path d="M45 31 C45 24 50 20 56 19 C56 27 52 32 45 31Z" fill="currentColor" stroke="none" />
      </>
    ),
  },
  {
    label: 'Activities',
    art: (
      <>
        <circle cx="45" cy="45" r="22" />
        <path d="M37 37 L45 34 L51 38 L51 47 L44 52 L35 47Z M54 25 Q62 28 66 36 L58 33Z M25 36 L35 25 L33 33Z M60 48 L67 42 L66 55 L60 57Z M36 64 Q44 60 52 64 L46 67Z" fill="currentColor" strokeWidth="1" />
        <path d="M37 37 L33 32 M51 38 L54 32 M51 47 L60 49 M43 52 L44 62 M35 47 L26 50" strokeWidth="2" />
      </>
    ),
  },
  {
    label: 'Travel',
    art: (
      <>
        <path d="M20 65 H15 Q13 64 14 58 Q16 48 20 45 L31 40 Q37 26 43 24 Q54 22 63 25 Q73 38 74 50 Q77 54 77 62 Q76 65 70 65 M35 65 H56 M38 58 H52 M64 26 L66 22" strokeWidth="3" />
        <path d="M37 42 Q42 28 48 28 H61 L64 42Z" fill="currentColor" stroke="none" />
        <path d="M17 52 Q18 46 24 45 Q24 50 17 52Z" fill="currentColor" strokeWidth="2" />
        <circle cx="28" cy="62" r="6" />
        <circle cx="63" cy="62" r="6" />
      </>
    ),
  },
  {
    label: 'Objects',
    art: (
      <>
        <path d="M38 60 C37 48 31 42 31 34 C31 25 37 20 45 20 C53 20 59 25 59 34 C59 42 53 48 52 60Z" strokeWidth="3" />
        <path d="M38 65 H52" strokeWidth="3" />
        <path d="M39 69 H52 Q50 74 45 74 Q41 74 39 69Z" fill="currentColor" stroke="none" />
      </>
    ),
  },
  {
    label: 'Symbols',
    art: <path d="M45 67 C39 60 23 50 23 35 C23 21 41 18 45 31 C49 18 67 21 67 35 C67 50 51 60 45 67Z" />,
  },
  {
    label: 'Flags',
    art: <path d="M26 66 V27 Q26 23 34 24 C44 26 52 30 64 26 V50 Q63 55 56 54 C46 52 38 48 26 52" />,
  },
];

function BackChevron() {
  return (
    <svg viewBox="0 0 36 60" className="-ml-2 w-9" fill="none" stroke="currentColor" strokeWidth="7" strokeLinecap="round" strokeLinejoin="round" aria-hidden="true">
      <path d="M30 5 L5 30 L30 55" />
    </svg>
  );
}

function StatusBar() {
  return (
    <div className="flex h-12 items-center justify-between pr-24 pl-[163px]">
      <span className="text-[52px] leading-[48px] font-semibold">8:44</span>
      <div className="flex items-center gap-[22px]">
        <svg viewBox="0 0 66 42" className="h-[42px] w-[66px]" aria-label="Signal" role="img">
          <rect x="0" y="25" width="11" height="17" rx="3" />
          <rect x="18" y="18" width="11" height="24" rx="3" />
          <rect x="36" y="9" width="11" height="33" rx="3" fillOpacity="0.22" />
          <rect x="54" y="0" width="11" height="42" rx="3" fillOpacity="0.22" />
        </svg>
        <svg viewBox="0 0 58 42" className="h-[42px] w-[58px]" aria-label="Wi-Fi" role="img">
          <path d="M29 0 C40 0 50 4 57 11 Q58 12 57 13 L53 18 Q52 18 51 17 C45 12 37 9 29 9 C21 9 13 12 7 17 Q6 18 5 18 L1 13 Q0 12 1 11 C8 4 18 0 29 0Z" />
          <path d="M29 14 C36 14 42 17 47 21 Q48 22 47 23 L42 28 Q41 29 40 28 C37 25 33 24 29 24 C25 24 21 25 18 28 Q17 29 16 28 L11 23 Q10 22 11 21 C16 17 22 14 29 14Z" />
          <path d="M29 28 C32 28 35 29 37 31 Q38 32 37 33 L30 41 Q29 42 28 41 L21 33 Q20 32 21 31 C23 29 26 28 29 28Z" />
        </svg>
        <div className="flex items-center gap-0.5">
          <div className="flex h-[45px] w-[86px] items-center justify-center rounded-[15px] bg-linear-to-r from-black from-21% to-[#907d86] to-21%">
            <span className="text-[40px] leading-none font-bold text-[#cdb4c1]">21</span>
          </div>
          <div className="h-3.5 w-1.5 rounded-r-full bg-[#907d86]" />
        </div>
      </div>
    </div>
  );
}

function EmojiKeyboard() {
  const [active, setActive] = useState('Frequently used');
  const [query, setQuery] = useState('');

  return (
    <section
      aria-label="Emoji keyboard"
      className="mt-auto overflow-hidden rounded-t-[108px] rounded-b-[204px] bg-[#e2e4e6] pt-7 pb-20 [corner-shape:superellipse(1.5)]"
    >
      <label className="mx-[27px] flex h-[120px] items-center gap-[22px] rounded-full bg-[#eeeff4] px-[39px] text-[#8a8b8f]">
        <svg viewBox="0 0 50 50" className="size-[50px] shrink-0" fill="none" stroke="currentColor" strokeWidth="5" strokeLinecap="round" aria-hidden="true">
          <circle cx="20" cy="20" r="17" />
          <path d="M33 33 L46 46" />
        </svg>
        <input
          type="text"
          aria-label="Search Emoji"
          placeholder="Search Emoji"
          value={query}
          onChange={(e) => setQuery(e.target.value)}
          className="h-full min-w-0 flex-1 bg-transparent text-[48px] text-black outline-none placeholder:text-[#8a8b8f]"
        />
      </label>

      <div className="mt-[60px] flex flex-col gap-[47px] overflow-hidden pl-[46px]">
        {emojiRows.map((row) => (
          <div key={row[0].label} className="flex gap-[47px]">
            {row.map((emoji) => (
              <button key={emoji.label} type="button" className="size-[114px] shrink-0">
                <Emoji label={emoji.label} className="size-full">
                  {emoji.art}
                </Emoji>
              </button>
            ))}
          </div>
        ))}
      </div>

      <div className="mt-[45px] flex items-center gap-[82px] pr-[51px] pl-16">
        <nav className="flex flex-1 justify-between">
          {categories.map((category) => (
            <button
              key={category.label}
              type="button"
              aria-label={category.label}
              onClick={() => setActive(category.label)}
              className={`size-[90px] rounded-full ${active === category.label ? 'bg-[#d2d3d7] text-[#41464f]' : 'text-[#53555d]'}`}
            >
              <svg viewBox="0 0 90 90" className="size-full" fill="none" stroke="currentColor" strokeWidth="4" strokeLinecap="round" strokeLinejoin="round" aria-hidden="true">
                {category.art}
              </svg>
            </button>
          ))}
        </nav>
        <button type="button" aria-label="Delete" className="text-[#2b2b2c]">
          <svg viewBox="0 0 66 54" className="h-[54px] w-[66px]" fill="none" stroke="currentColor" strokeWidth="5" strokeLinecap="round" strokeLinejoin="round" aria-hidden="true">
            <path d="M28 3 H56 Q63 3 63 10 V44 Q63 51 56 51 H28 Q25 51 22 48 L4 30 Q2 27 4 24 L22 6 Q25 3 28 3Z" />
            <path d="M28 17 L49 38 M49 17 L28 38" />
          </svg>
        </button>
      </div>

      <div className="mt-[89px] flex items-end justify-between pr-[97px] pl-20">
        <button type="button" className="text-[46px] leading-[42px] text-[#3c3c3c]">
          ABC
        </button>
        <button type="button" aria-label="Dictate">
          <svg viewBox="0 0 58 86" className="h-[86px] w-[58px]" fill="none" stroke="currentColor" strokeWidth="5" strokeLinecap="round" aria-hidden="true">
            <rect x="17" y="3" width="24" height="51" rx="12" />
            <path d="M3 35 V42 C3 58 14 67 29 67 C44 67 55 58 55 42 V35 M29 67 V82 M11 83 H47" />
          </svg>
        </button>
      </div>
    </section>
  );
}

export default function App() {
  return (
    <div className="flex min-h-screen flex-col bg-[#cdb4c1] pt-[52px] font-[Inter,sans-serif] text-black">
      <Gradients />
      <StatusBar />

      <header className="mt-[41px] flex h-[375px] shrink-0 items-start justify-between px-[60px]">
        <button type="button" aria-label="Back" className="flex size-[132px] items-center justify-center rounded-full bg-[#cfbfcf] text-[#928293]">
          <BackChevron />
        </button>
        <h1 className="mt-[73px] text-[98px] leading-[120px] font-bold">(SP) Proposed</h1>
        <button type="button" aria-label="More" className="flex size-[132px] items-center justify-center gap-[11px] rounded-full bg-[#cfbfcf]">
          <span className="size-[13px] rounded-full bg-black" />
          <span className="size-[13px] rounded-full bg-black" />
          <span className="size-[13px] rounded-full bg-black" />
        </button>
      </header>

      <main className="flex flex-1 flex-col rounded-t-[154px] bg-white pt-[60px] [corner-shape:superellipse(1.5)]">
        <div className="flex items-center justify-between px-[60px]">
          <button type="button" aria-label="Close entry" className="flex size-[132px] items-center justify-center rounded-full bg-[#fffffe] shadow-[0_24px_110px_rgba(0,0,0,0.1)]">
            <BackChevron />
          </button>
          <h2 className="text-[49px] leading-[62px] font-semibold">May 3, 2026 at 8:41&#8239;PM</h2>
          <div className="w-[132px]" />
        </div>

        <p className="mt-[53px] px-16 text-[48px] leading-[78px]">
          {entryLines.map((line) => (
            <span key={line} className="block">
              {line}
            </span>
          ))}
          was really up to.{' '}
          <Emoji label="Smiling face with hearts" className="-mt-3 inline-block size-[62px]">
            <SmilingHearts />
          </Emoji>
        </p>

        <EmojiKeyboard />
      </main>
    </div>
  );
}
